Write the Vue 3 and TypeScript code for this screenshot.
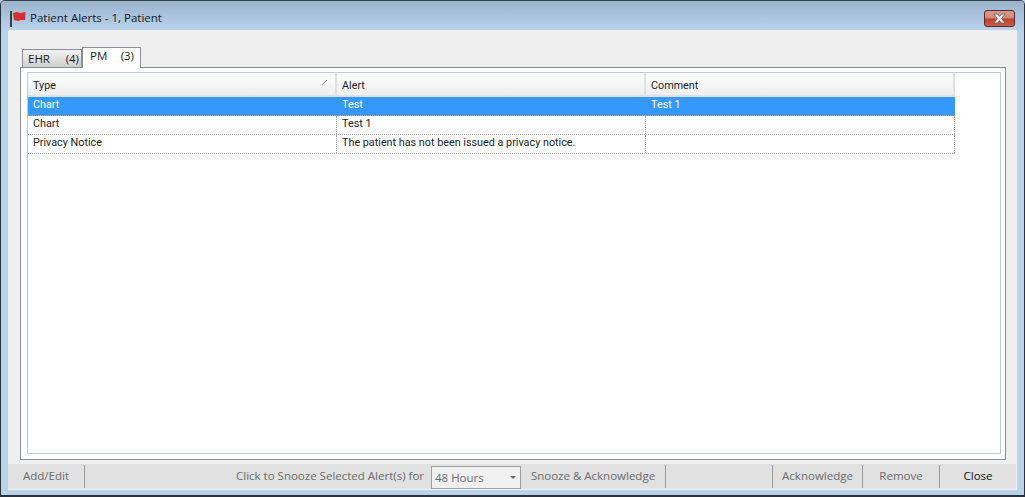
<script setup lang="ts">
interface Row { type: string; alert: string; comment: string; selected?: boolean }
const rows: Row[] = [
  { type: 'Chart', alert: 'Test', comment: 'Test 1', selected: true },
  { type: 'Chart', alert: 'Test 1', comment: '' },
  { type: 'Privacy Notice', alert: 'The patient has not been issued a privacy notice.', comment: '' },
]
</script>

<template>
  <div class="window">
    <header class="titlebar">
      <svg class="flag" width="16" height="16" viewBox="0 0 16 16">
        <rect x="0" y="0" width="2" height="16" fill="#3a3f46" />
        <path d="M3 2 L7 1 L10 2 L15 1 L15.5 2 L15 9 L11 9 L8 10 L4 9 Z" fill="#d62f2f" />
      </svg>
      <span class="title">Patient Alerts - 1, Patient</span>
      <button class="close-x" aria-label="Close">
        <svg width="15" height="11" viewBox="0 0 15 11">
          <path d="M2 1 H5.5 L7.5 3.4 L9.5 1 H13 L9.6 5.5 L13 10 H9.5 L7.5 7.6 L5.5 10 H2 L5.4 5.5 Z" fill="#eef0f4" stroke="#6b5a60" stroke-width="0.8" />
        </svg>
      </button>
    </header>

    <main class="client">
      <div class="tabs">
        <div class="tab">
          <span>EHR</span><span>(4)</span>
        </div>
        <div class="tab active">
          <span>PM</span><span>(3)</span>
        </div>
      </div>

      <section class="panel">
        <div class="grid-box">
          <div class="grid">
            <div class="head">
              <div class="hcell"><span>Type</span><i class="sort"></i></div>
              <div class="hcell">Alert</div>
              <div class="hcell">Comment</div>
            </div>
            <div v-for="(r, i) in rows" :key="i" class="row" :class="{ selected: r.selected }">
              <div class="cell">{{ r.type }}</div>
              <div class="cell">{{ r.alert }}</div>
              <div class="cell">{{ r.comment }}</div>
            </div>
          </div>
        </div>
      </section>

      <footer class="toolbar">
        <div class="tbtn add">Add/Edit</div>
        <div class="snooze">
          <span class="label">Click to Snooze Selected Alert(s) for</span>
          <div class="select"><span>48 Hours</span><i class="caret"></i></div>
          <div class="tbtn ack-snooze">Snooze &amp; Acknowledge</div>
        </div>
        <div class="tbtn ack">Acknowledge</div>
        <div class="tbtn rem">Remove</div>
        <div class="tbtn close">Close</div>
      </footer>
    </main>
  </div>
</template>

<style>
html, body { margin: 0; overflow: hidden; background: #b8d2ea; }
</style>

<style scoped>
.window {
  width: 1025px;
  height: 497px;
  box-sizing: border-box;
  display: flex;
  flex-direction: column;
  border: 1px solid #2a3138;
  border-top-color: #3c4046;
  border-bottom-width: 2px;
  border-radius: 5px 5px 0 0;
  background: #b8d2ea;
  font-family: Roboto, "Open Sans", sans-serif;
  font-size: 10.8px;
  color: #1c1c1c;
}
.titlebar {
  height: 29px;
  flex: none;
  display: flex;
  align-items: center;
  padding: 0 9px 0 9px;
  background: linear-gradient(#9bb4ce, #b9d1e9);
  border-radius: 4px 4px 0 0;
}
.flag { margin-right: 4px; margin-top: 6px; }
.title { font-family: "Open Sans", sans-serif; font-size: 11.5px; color: #14181c; margin-top: 4px; }
.close-x {
  margin-left: auto;
  margin-top: 6px;
  width: 31px;
  height: 17px;
  padding: 0;
  display: flex;
  align-items: center;
  justify-content: center;
  border: 1px solid #5a2a30;
  border-radius: 3px;
  background: linear-gradient(#d99a8e 0%, #d08a7c 45%, #b8432e 55%, #c9604a 100%);
}
.client {
  flex: 1;
  margin: 0 7px 6px 7px;
  background: #efefef;
  display: flex;
  flex-direction: column;
  border-bottom: 1px solid #f4f4f4;
}
.tabs {
  height: 37px;
  flex: none;
  box-sizing: border-box;
  padding-left: 14px;
  display: flex;
  align-items: flex-end;
  font-family: "Open Sans", sans-serif;
  font-size: 11.5px;
}
.tab {
  width: 60px;
  height: 18px;
  box-sizing: border-box;
  display: flex;
  justify-content: space-between;
  padding: 1px 2px 0 5px;
  line-height: 16px;
  border: 1px solid #8a8d92;
  border-bottom: none;
  background: linear-gradient(#f2f2f2, #cfcfcf);
}
.tab.active {
  width: 59px;
  margin-bottom: -1px;
  height: 21px;
  background: #fff;
  padding: 0 6px 0 7px;
  position: relative;
  z-index: 1;
}
.panel {
  height: 393px;
  flex: none;
  box-sizing: border-box;
  margin: 0 11px 0 12px;
  width: 986px;
  padding: 4px 4px 5px 6px;
  background: #fff;
  border: 1px solid #8a8d92;
}
.grid-box {
  height: 100%;
  box-sizing: border-box;
  border: 1px solid #bccdd8;
}
.grid { width: 927px; }
.head { display: grid; grid-template-columns: 309px 309px 309px; height: 24px; }
.hcell {
  display: flex;
  align-items: center;
  justify-content: space-between;
  padding: 2px 5px 0;
  box-sizing: border-box;
  background: linear-gradient(#ffffff, #eeeeee);
  border-right: 2px solid #e0e2e2;
  border-bottom: 2px solid #dfe1e1;
}
.sort {
  width: 5px;
  height: 5px;
  margin-right: 3px;
  margin-top: -6px;
  background: linear-gradient(135deg, transparent 45%, #888 48%, #888 58%, transparent 60%);
}
.row {
  display: grid;
  grid-template-columns: 309px 309px 309px;
  height: 19px;
  box-sizing: border-box;
  border-bottom: 1px dotted #a8a8a8;
}
.cell {
  padding: 1px 5px 0;
  line-height: 13px;
  box-sizing: border-box;
  border-right: 1px dotted #a8a8a8;
}
.row.selected { background: #3399ff; color: #fff; }
.row.selected .cell { border-right-color: transparent; }
.toolbar {
  margin-top: 4px;
  height: 25px;
  display: flex;
  align-items: center;
  background: #e1e1e1;
  margin-right: 1px;
  color: #6b6b6b;
  font-family: "Open Sans", sans-serif;
  font-size: 11.5px;
}
.tbtn {
  height: 23px;
  box-sizing: border-box;
  display: flex;
  align-items: center;
  justify-content: center;
  padding-bottom: 2px;
  white-space: nowrap;
  border-right: 1px solid #9a9a9a;
}
.add { width: 77px; }
.snooze {
  width: 581px;
  height: 100%;
  display: flex;
  align-items: center;
  padding-left: 151px;
  box-sizing: border-box;
}
.label { width: 195px; white-space: nowrap; padding-bottom: 2px; }
.select {
  width: 90px;
  height: 23px;
  margin-top: 1px;
  box-sizing: border-box;
  border: 1px solid #a0a0a0;
  background: #f0f0f0;
  display: flex;
  align-items: center;
  justify-content: space-between;
  padding: 0 4px 0 3px;
}
.caret {
  width: 0;
  height: 0;
  border: 3px solid transparent;
  border-top: 3px solid #666;
  border-bottom: none;
}
.ack-snooze { width: 145px; }
.ack { width: 91px; margin-left: 106px; border-left: 1px solid #9a9a9a; }
.rem { width: 77px; }
.close { border-right: none; flex: 1; color: #111; }
</style>
